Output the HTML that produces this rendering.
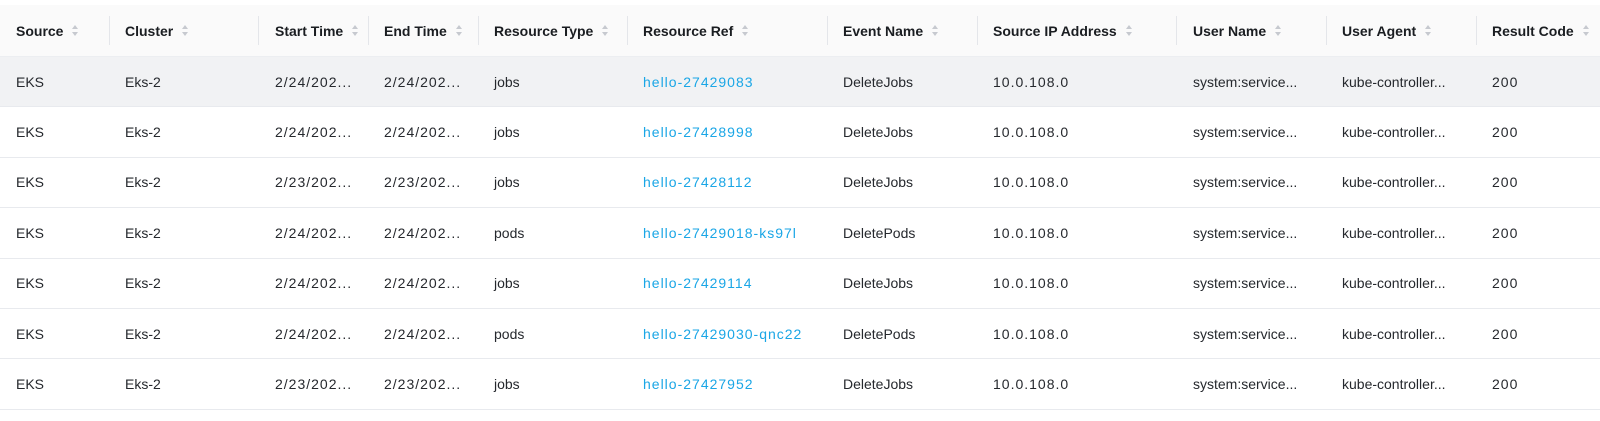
<!DOCTYPE html>
<html><head><meta charset="utf-8"><style>
body{margin:0;background:#fff;width:1600px;height:421px;overflow:hidden;font-family:"Liberation Sans",sans-serif;font-size:14px;color:#25282d}
.t{position:absolute;left:0;top:5px;width:1600px}
.h{height:51px;background:#fafafa;border-bottom:1px solid #eceef1;position:relative}
.r{height:49.4px;border-bottom:1px solid #e8eaee;position:relative}
.r.s{background:#f1f2f4}
.c{position:absolute;top:0;height:100%;display:flex;align-items:center;white-space:nowrap}
.h .c{font-weight:bold;color:#1a1d21}
.n{letter-spacing:1px}
.sep{position:absolute;top:11px;width:1px;height:29px;background:#e4e6ea}
.ic{display:inline-block;margin-left:9px;width:7px;height:12px;position:relative}
.ic:before,.ic:after{content:"";position:absolute;left:0;border-left:3.5px solid transparent;border-right:3.5px solid transparent}
.ic:before{top:0;border-bottom:4px solid #c6c9cf}
.ic:after{bottom:1px;border-top:4px solid #c6c9cf}
a{color:#1aa6e6;text-decoration:none}
</style></head><body>
<div class="t">
<div class="h">
<div class="c" style="left:16px">Source<span class="ic"></span></div><div class="sep" style="left:109px"></div>
<div class="c" style="left:125px">Cluster<span class="ic"></span></div><div class="sep" style="left:258px"></div>
<div class="c" style="left:275px">Start Time<span class="ic"></span></div><div class="sep" style="left:368px"></div>
<div class="c" style="left:384px">End Time<span class="ic"></span></div><div class="sep" style="left:478px"></div>
<div class="c" style="left:494px">Resource Type<span class="ic"></span></div><div class="sep" style="left:627px"></div>
<div class="c" style="left:643px">Resource Ref<span class="ic"></span></div><div class="sep" style="left:827px"></div>
<div class="c" style="left:843px">Event Name<span class="ic"></span></div><div class="sep" style="left:977px"></div>
<div class="c" style="left:993px">Source IP Address<span class="ic"></span></div><div class="sep" style="left:1176px"></div>
<div class="c" style="left:1193px">User Name<span class="ic"></span></div><div class="sep" style="left:1326px"></div>
<div class="c" style="left:1342px">User Agent<span class="ic"></span></div><div class="sep" style="left:1476px"></div>
<div class="c" style="left:1492px">Result Code<span class="ic"></span></div>
</div>
<div class="r s"><div class="c" style="left:16px">EKS</div><div class="c" style="left:125px">Eks-2</div><div class="c n" style="left:275px">2/24/202...</div><div class="c n" style="left:384px">2/24/202...</div><div class="c" style="left:494px">jobs</div><div class="c n" style="left:643px"><a>hello-27429083</a></div><div class="c" style="left:843px">DeleteJobs</div><div class="c n" style="left:993px">10.0.108.0</div><div class="c" style="left:1193px">system:service...</div><div class="c" style="left:1342px">kube-controller...</div><div class="c n" style="left:1492px">200</div></div>
<div class="r"><div class="c" style="left:16px">EKS</div><div class="c" style="left:125px">Eks-2</div><div class="c n" style="left:275px">2/24/202...</div><div class="c n" style="left:384px">2/24/202...</div><div class="c" style="left:494px">jobs</div><div class="c n" style="left:643px"><a>hello-27428998</a></div><div class="c" style="left:843px">DeleteJobs</div><div class="c n" style="left:993px">10.0.108.0</div><div class="c" style="left:1193px">system:service...</div><div class="c" style="left:1342px">kube-controller...</div><div class="c n" style="left:1492px">200</div></div>
<div class="r"><div class="c" style="left:16px">EKS</div><div class="c" style="left:125px">Eks-2</div><div class="c n" style="left:275px">2/23/202...</div><div class="c n" style="left:384px">2/23/202...</div><div class="c" style="left:494px">jobs</div><div class="c n" style="left:643px"><a>hello-27428112</a></div><div class="c" style="left:843px">DeleteJobs</div><div class="c n" style="left:993px">10.0.108.0</div><div class="c" style="left:1193px">system:service...</div><div class="c" style="left:1342px">kube-controller...</div><div class="c n" style="left:1492px">200</div></div>
<div class="r"><div class="c" style="left:16px">EKS</div><div class="c" style="left:125px">Eks-2</div><div class="c n" style="left:275px">2/24/202...</div><div class="c n" style="left:384px">2/24/202...</div><div class="c" style="left:494px">pods</div><div class="c n" style="left:643px"><a>hello-27429018-ks97l</a></div><div class="c" style="left:843px">DeletePods</div><div class="c n" style="left:993px">10.0.108.0</div><div class="c" style="left:1193px">system:service...</div><div class="c" style="left:1342px">kube-controller...</div><div class="c n" style="left:1492px">200</div></div>
<div class="r"><div class="c" style="left:16px">EKS</div><div class="c" style="left:125px">Eks-2</div><div class="c n" style="left:275px">2/24/202...</div><div class="c n" style="left:384px">2/24/202...</div><div class="c" style="left:494px">jobs</div><div class="c n" style="left:643px"><a>hello-27429114</a></div><div class="c" style="left:843px">DeleteJobs</div><div class="c n" style="left:993px">10.0.108.0</div><div class="c" style="left:1193px">system:service...</div><div class="c" style="left:1342px">kube-controller...</div><div class="c n" style="left:1492px">200</div></div>
<div class="r"><div class="c" style="left:16px">EKS</div><div class="c" style="left:125px">Eks-2</div><div class="c n" style="left:275px">2/24/202...</div><div class="c n" style="left:384px">2/24/202...</div><div class="c" style="left:494px">pods</div><div class="c n" style="left:643px"><a>hello-27429030-qnc22</a></div><div class="c" style="left:843px">DeletePods</div><div class="c n" style="left:993px">10.0.108.0</div><div class="c" style="left:1193px">system:service...</div><div class="c" style="left:1342px">kube-controller...</div><div class="c n" style="left:1492px">200</div></div>
<div class="r"><div class="c" style="left:16px">EKS</div><div class="c" style="left:125px">Eks-2</div><div class="c n" style="left:275px">2/23/202...</div><div class="c n" style="left:384px">2/23/202...</div><div class="c" style="left:494px">jobs</div><div class="c n" style="left:643px"><a>hello-27427952</a></div><div class="c" style="left:843px">DeleteJobs</div><div class="c n" style="left:993px">10.0.108.0</div><div class="c" style="left:1193px">system:service...</div><div class="c" style="left:1342px">kube-controller...</div><div class="c n" style="left:1492px">200</div></div>
</div>
</body></html>
